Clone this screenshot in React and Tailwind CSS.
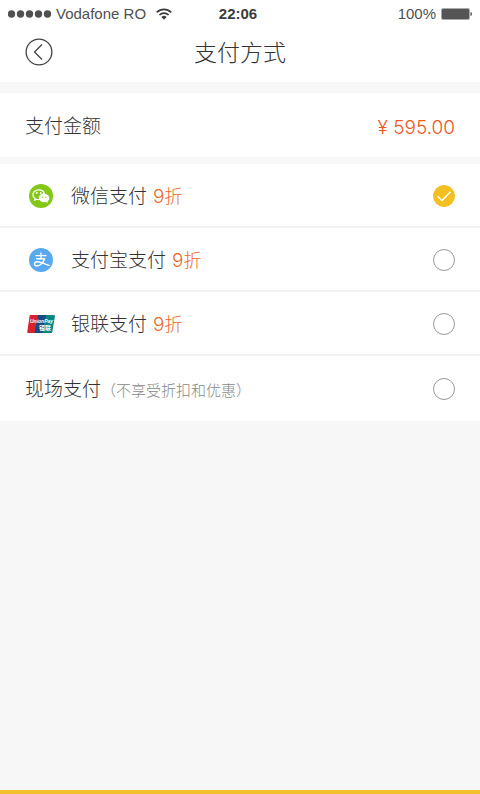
import React, { useState } from "react";

const methods = [
  { id: "wechat", name: "微信支付", discount: 9, Icon: WechatIcon },
  { id: "alipay", name: "支付宝支付", discount: 9, Icon: AlipayIcon },
  { id: "unionpay", name: "银联支付", discount: 9, Icon: UnionPayIcon },
  { id: "onsite", name: "现场支付", note: "（不享受折扣和优惠）" },
];

function WechatIcon() {
  return (
    <svg className="w-6 h-6" viewBox="0 0 24 24" aria-hidden="true">
      <circle cx="12" cy="12" r="12" fill="#84c817" />
      <path
        d="M9.7 5.8c-3.2 0-5.8 2.1-5.8 4.9 0 1.6.8 2.9 2.2 3.8l-.6 1.8 2.2-1.1c.9.3 1.8.4 2.8.3-.8-3.2 1.6-5.7 5-5.7-.5-2.3-2.8-4-5.8-4z"
        fill="none"
        stroke="#fff"
        strokeWidth="1.2"
        strokeLinejoin="round"
      />
      <path
        d="M15.3 10.1c-2.9 0-5 1.8-5 4.1s2.1 4.1 5 4.1c.6 0 1.2-.1 1.7-.3l1.9.9-.5-1.6c1.2-.8 1.9-1.8 1.9-3.1 0-2.3-2.2-4.1-5-4.1z"
        fill="#fff"
      />
      <circle cx="7.8" cy="9" r="0.9" fill="#fff" />
      <circle cx="11.7" cy="9" r="0.9" fill="#fff" />
      <circle cx="13.7" cy="13.2" r="0.7" fill="#84c817" />
      <circle cx="17" cy="13.2" r="0.7" fill="#84c817" />
    </svg>
  );
}

function AlipayIcon() {
  return (
    <svg className="w-6 h-6" viewBox="0 0 24 24" aria-hidden="true">
      <circle cx="12" cy="12" r="12" fill="#58a9f0" />
      <g fill="none" stroke="#fff" strokeLinecap="round" strokeLinejoin="round">
        <path d="M7 7.7h10M12 4.9v5.8" strokeWidth="1.3" />
        <path
          d="M7.8 10.8h7.8c-.8 2.4-2.1 4.3-3.9 5.7-1.9 1.4-4.7 1.8-5.7.7-1.1-1.3-.3-3.3 1.9-3.5 3.4-.3 6.8 2.2 12.1 3.7"
          strokeWidth="1.5"
        />
      </g>
    </svg>
  );
}

function UnionPayIcon() {
  return (
    <svg className="w-7 h-[18px]" viewBox="0 0 28 18" aria-hidden="true">
      <path d="M3.5 0H13L9.5 18H1.2Q0 18 .3 16.5L2.6 1Q2.8 0 3.5 0z" fill="#d8232f" />
      <path d="M11 0h9l-3.5 18h-9z" fill="#124b85" />
      <path d="M19 0h8Q28.2 0 27.9 1.5L25.3 17Q25.1 18 24 18h-8.5z" fill="#078783" />
      <text x="3" y="8" fontSize="5" fontWeight="700" fontStyle="italic" fontFamily="Liberation Sans, sans-serif" fill="#fff">
        UnionPay
      </text>
      <text x="12" y="15" fontSize="6" fontWeight="700" fontFamily="Noto Sans CJK SC, sans-serif" fill="#fff">
        银联
      </text>
    </svg>
  );
}

const StatusBar = () => (
  <div className="grid grid-cols-[1fr_auto_1fr] items-center h-7 px-2 font-['Liberation_Sans',sans-serif] text-[15px] text-[#505050]">
    <div className="flex items-center gap-1">
      <svg className="w-11 h-2" viewBox="0 0 44 8" fill="#505050" aria-hidden="true">
        <circle cx="3.5" cy="4" r="3.7" />
        <circle cx="12.5" cy="4" r="3.7" />
        <circle cx="21.5" cy="4" r="3.7" />
        <circle cx="30.5" cy="4" r="3.7" />
        <circle cx="39.5" cy="4" r="3.7" />
      </svg>
      <span>Vodafone RO</span>
      <svg className="ml-[6px] w-4 h-3" viewBox="0 0 16 12" fill="none" stroke="#3c3c3c" strokeWidth="1.7" aria-hidden="true">
        <path d="M.8 4.3a10.3 10.3 0 0 1 14.4 0M3.4 7a6.5 6.5 0 0 1 9.2 0" />
        <path d="M5.4 9a3.8 3.8 0 0 1 5.2 0L8 11.7z" fill="#3c3c3c" stroke="none" />
      </svg>
    </div>
    <span className="mr-1 font-bold text-[#3c3c3c]">22:06</span>
    <div className="flex items-center justify-end gap-1">
      <span>100%</span>
      <svg className="w-8 h-3" viewBox="0 0 32 12" aria-hidden="true">
        <rect x="1.5" y=".5" width="28" height="11" rx="1.5" fill="#555" stroke="#aaa" />
        <path d="M30.5 4q1.5 0 1.5 2t-1.5 2z" fill="#555" />
      </svg>
    </div>
  </div>
);

const PaymentOption = ({ method, checked, onChange }) => {
  const { id, name, discount, note, Icon } = method;
  return (
    <label className="flex items-center h-16 last:h-[65px] pt-[2px] last:pt-0 px-[25px] cursor-pointer">
      {Icon && (
        <span className="flex items-center justify-center w-8 mr-[14px]">
          <Icon />
        </span>
      )}
      <span className="flex items-baseline">
        <span className="text-[19px] text-[#333]">{name}</span>
        {discount && (
          <span className="ml-[6px] text-[18px] text-[#ec6a2b]">
            <span className="font-['Inter',sans-serif] text-[19px]">{discount}</span>折
          </span>
        )}
        {note && <span className="text-[15px] text-[#888]">{note}</span>}
      </span>
      <span className="relative flex ml-auto">
        <input
          type="radio"
          name="payment"
          value={id}
          checked={checked}
          onChange={onChange}
          className="appearance-none w-[22px] h-[22px] rounded-full border border-[#999] checked:border-[#f3bf22] checked:bg-[#f3bf22]"
        />
        {checked && (
          <svg className="absolute inset-0 pointer-events-none" viewBox="0 0 22 22" fill="none" stroke="#fff" strokeWidth="1.5" aria-hidden="true">
            <path d="M4.5 11.3l4.5 4.2 8.5-8.7" />
          </svg>
        )}
      </span>
    </label>
  );
};

export default function App() {
  const [selected, setSelected] = useState("wechat");

  return (
    <div className="flex flex-col min-h-screen bg-[#f7f7f7] font-['Noto_Sans_CJK_SC',sans-serif] font-light">
      <header className="bg-white">
        <StatusBar />
        <div className="grid grid-cols-[1fr_auto_1fr] items-center h-[54px] px-[25px] pb-[6px]">
          <button type="button" aria-label="返回" className="w-7 h-7 cursor-pointer">
            <svg viewBox="0 0 28 28" fill="none" stroke="#444" strokeWidth="1.3">
              <circle cx="14" cy="14" r="12.9" />
              <path d="M17 6.5L9.5 14l7.5 7.5" />
            </svg>
          </button>
          <h1 className="pb-[2px] text-[23px] leading-7 text-[#333]">支付方式</h1>
        </div>
      </header>

      <main className="flex-1">
        {/* Amount */}
        <section className="flex items-center justify-between h-16 mt-[11px] px-[25px] bg-white">
          <span className="text-[19px] text-[#333]">支付金额</span>
          <span className="pt-[6px] font-['Inter',sans-serif] text-[19px] text-[#ec5a1b]">¥ 595.00</span>
        </section>

        {/* Payment methods */}
        <section className="mt-[7px] bg-white divide-y-2 divide-[#f2f2f2]">
          {methods.map((method) => (
            <PaymentOption
              key={method.id}
              method={method}
              checked={selected === method.id}
              onChange={() => setSelected(method.id)}
            />
          ))}
        </section>
      </main>

      <footer className="h-1 bg-[#f3c02c]" />
    </div>
  );
}
